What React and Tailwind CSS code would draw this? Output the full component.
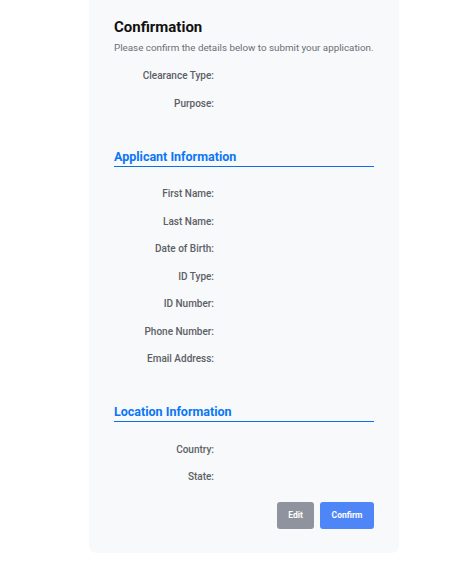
export default function App() {
  const Row = ({ label }) => (
    <div className="flex items-center h-[27.5px]">
      <span className="w-[100px] text-right text-[10px] font-medium text-[#5c6066]">{label}</span>
      <span className="ml-3 text-[10px] text-[#333]"></span>
    </div>
  );

  const Section = ({ title }) => (
    <div className="border-b-[1.5px] border-[#0b6fe8] pb-[2px]">
      <h2 className="text-[12.5px] leading-[15px] font-bold text-[#0b76f5]">{title}</h2>
    </div>
  );

  return (
    <div className="min-h-screen bg-white" style={{ fontFamily: 'Roboto, "Noto Sans", sans-serif' }}>
      <div className="ml-[89px] w-[310px] bg-[#f8f9fa] rounded-b-lg px-[25px] pt-[18px] pb-[24px]">
        <h1 className="text-[15px] leading-[18px] font-bold text-[#111]">Confirmation</h1>
        <p className="mt-[6px] text-[9.8px] leading-[12px] text-[#6b6f75]">
          Please confirm the details below to submit your application.
        </p>

        <div className="mt-[8px]">
          <Row label="Clearance Type:" />
          <Row label="Purpose:" />
        </div>

        <div className="mt-[32px]">
          <Section title="Applicant Information" />
          <div className="mt-[13px]">
            <Row label="First Name:" />
            <Row label="Last Name:" />
            <Row label="Date of Birth:" />
            <Row label="ID Type:" />
            <Row label="ID Number:" />
            <Row label="Phone Number:" />
            <Row label="Email Address:" />
          </div>
        </div>

        <div className="mt-[31px]">
          <Section title="Location Information" />
          <div className="mt-[14px]">
            <Row label="Country:" />
            <Row label="State:" />
          </div>
        </div>

        <div className="mt-[11px] flex justify-end gap-[6px]">
          <button className="h-[27px] w-[37px] rounded-[3px] bg-[#8e939e] text-[8.5px] font-bold text-white">Edit</button>
          <button className="h-[27px] w-[54px] rounded-[3px] bg-[#4f86f7] text-[8.5px] font-bold text-white">Confirm</button>
        </div>
      </div>
    </div>
  );
}
